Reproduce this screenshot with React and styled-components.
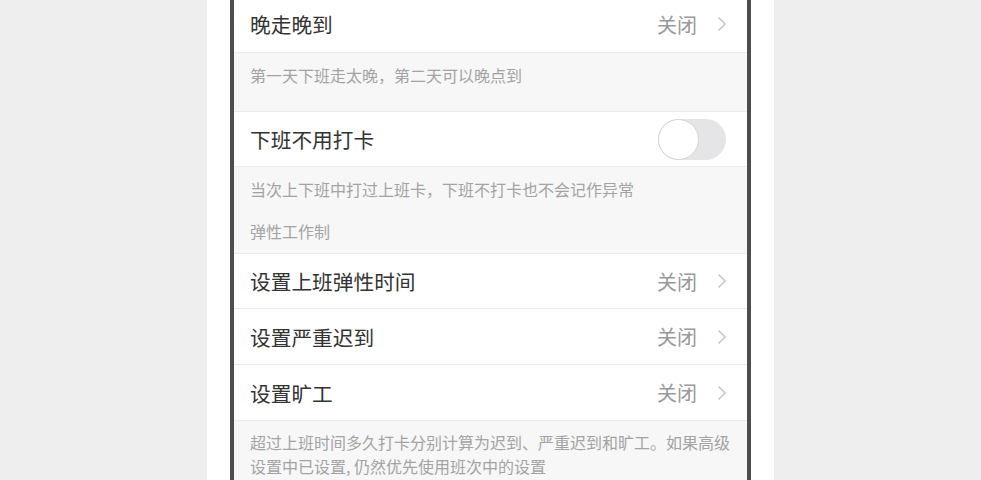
import React from 'react'
import styled, { createGlobalStyle } from 'styled-components'

const Global = createGlobalStyle`
  html, body {
    margin: 0;
    padding: 0;
    background: #eeeeee;
    font-family: "Noto Sans CJK SC", "Noto Sans", sans-serif;
    overflow: hidden;
  }
`

const Page = styled.div`
  display: flex;
  justify-content: center;
  height: 480px;
  overflow: hidden;
`

const Column = styled.div`
  width: 521px;
  padding: 0 23px;
  background: #fff;
  display: flex;
`

const Frame = styled.div`
  flex: 1;
  border-left: 4px solid #4d4d4d;
  border-right: 4px solid #4d4d4d;
  background: #f7f7f7;
  margin-top: -4px;
`

const Row = styled.div`
  height: 55px;
  display: flex;
  align-items: center;
  padding: 0 20px 0 16px;
  background: #fff;
  border-bottom: 1px solid #ececec;
  ${p => p.$top && 'border-top: 1px solid #ececec; height: 54px;'}
`

const Label = styled.div`
  flex: 1;
  font-size: 20.7px;
  color: #333;
`

const Value = styled.span`
  font-size: 20px;
  color: #999;
  margin-right: 20px;
`

const Note = styled.div`
  padding: ${p => p.$pad || '11px 12px 11px 16px'};
  font-size: 16px;
  line-height: ${p => p.$lh || '22px'};
  color: #a3a3a3;
`

const Toggle = styled.div`
  width: 68px;
  height: 41px;
  margin-right: 1px;
  box-sizing: border-box;
  border-radius: 21px;
  background: #e5e5e7;
  position: relative;
`

const Knob = styled.div`
  position: absolute;
  left: 0;
  top: 0;
  width: 41px;
  height: 41px;
  box-sizing: border-box;
  border-radius: 50%;
  background: #fff;
  border: 1.5px solid #d4d4d4;
`

const Chevron = () => (
  <svg width="10" height="16" viewBox="0 0 10 16">
    <polyline points="1.5,1.5 8,8 1.5,14.5" fill="none" stroke="#c8c8cc" strokeWidth="1.6" />
  </svg>
)

const LinkRow = ({ title }) => (
  <Row>
    <Label>{title}</Label>
    <Value>关闭</Value>
    <Chevron />
  </Row>
)

export default function App() {
  return (
    <>
      <Global />
      <Page>
        <Column>
          <Frame>
            <Row style={{ height: 56 }}>
              <Label>晚走晚到</Label>
              <Value>关闭</Value>
              <Chevron />
            </Row>
            <Note $pad="11px 12px 25px 16px">第一天下班走太晚，第二天可以晚点到</Note>
            <Row $top>
              <Label>下班不用打卡</Label>
              <Toggle>
                <Knob />
              </Toggle>
            </Row>
            <Note $pad="11px 12px 0 16px">当次上下班中打过上班卡，下班不打卡也不会记作异常</Note>
            <Note $pad="20px 12px 11px 16px">弹性工作制</Note>
            <Row $top>
              <Label>设置上班弹性时间</Label>
              <Value>关闭</Value>
              <Chevron />
            </Row>
            <LinkRow title="设置严重迟到" />
            <LinkRow title="设置旷工" />
            <Note $pad="9px 12px 9px 16px" $lh="24px">
              超过上班时间多久打卡分别计算为迟到、严重迟到和旷工。如果高级设置中已设置, 仍然优先使用班次中的设置
            </Note>
          </Frame>
        </Column>
      </Page>
    </>
  )
}
